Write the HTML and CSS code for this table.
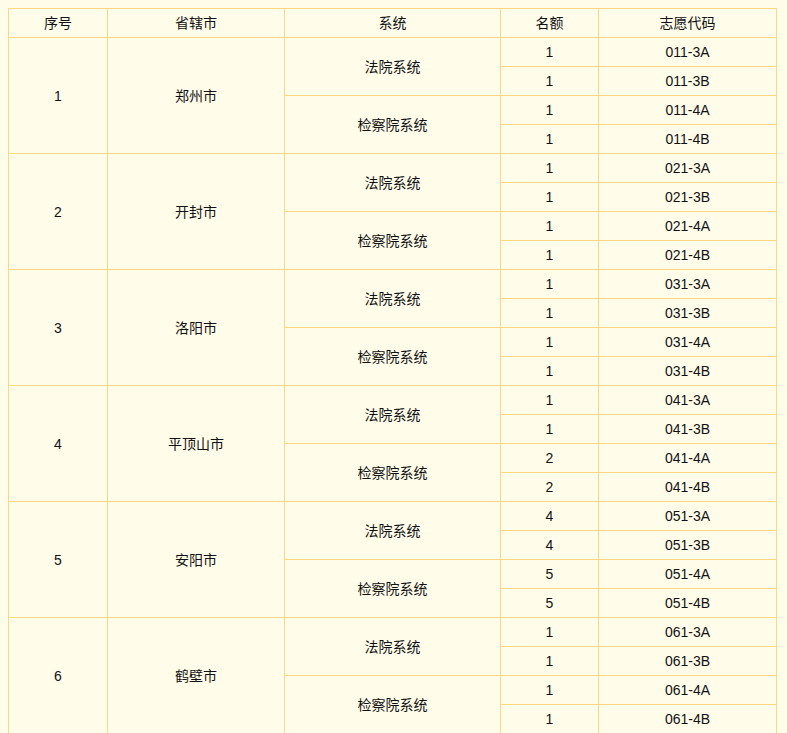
FILE: index.html
```html
<!DOCTYPE html>
<html lang="zh">
<head>
<meta charset="utf-8">
<link rel="stylesheet" href="styles.css">
</head>
<body>
<table class="quota">
<colgroup>
<col class="c1"><col class="c2"><col class="c3"><col class="c4"><col class="c5">
</colgroup>
<thead>
<tr><th>序号</th><th>省辖市</th><th>系统</th><th>名额</th><th>志愿代码</th></tr>
</thead>
<tbody>
<tr><td rowspan="4">1</td><td rowspan="4">郑州市</td><td rowspan="2">法院系统</td><td>1</td><td>011-3A</td></tr>
<tr><td>1</td><td>011-3B</td></tr>
<tr><td rowspan="2">检察院系统</td><td>1</td><td>011-4A</td></tr>
<tr><td>1</td><td>011-4B</td></tr>
<tr><td rowspan="4">2</td><td rowspan="4">开封市</td><td rowspan="2">法院系统</td><td>1</td><td>021-3A</td></tr>
<tr><td>1</td><td>021-3B</td></tr>
<tr><td rowspan="2">检察院系统</td><td>1</td><td>021-4A</td></tr>
<tr><td>1</td><td>021-4B</td></tr>
<tr><td rowspan="4">3</td><td rowspan="4">洛阳市</td><td rowspan="2">法院系统</td><td>1</td><td>031-3A</td></tr>
<tr><td>1</td><td>031-3B</td></tr>
<tr><td rowspan="2">检察院系统</td><td>1</td><td>031-4A</td></tr>
<tr><td>1</td><td>031-4B</td></tr>
<tr><td rowspan="4">4</td><td rowspan="4">平顶山市</td><td rowspan="2">法院系统</td><td>1</td><td>041-3A</td></tr>
<tr><td>1</td><td>041-3B</td></tr>
<tr><td rowspan="2">检察院系统</td><td>2</td><td>041-4A</td></tr>
<tr><td>2</td><td>041-4B</td></tr>
<tr><td rowspan="4">5</td><td rowspan="4">安阳市</td><td rowspan="2">法院系统</td><td>4</td><td>051-3A</td></tr>
<tr><td>4</td><td>051-3B</td></tr>
<tr><td rowspan="2">检察院系统</td><td>5</td><td>051-4A</td></tr>
<tr><td>5</td><td>051-4B</td></tr>
<tr><td rowspan="4">6</td><td rowspan="4">鹤壁市</td><td rowspan="2">法院系统</td><td>1</td><td>061-3A</td></tr>
<tr><td>1</td><td>061-3B</td></tr>
<tr><td rowspan="2">检察院系统</td><td>1</td><td>061-4A</td></tr>
<tr><td>1</td><td>061-4B</td></tr>
</tbody>
</table>
</body>
</html>
```

FILE: styles.css
```css
html, body {
  background: #fffcea;
}
body {
  margin: 8px;
  font-family: "Liberation Sans", Arial, "Noto Sans CJK SC", sans-serif;
  font-size: 14px;
  color: #111;
}
.quota {
  width: 768px;
  border-collapse: collapse;
  table-layout: fixed;
}
.quota .c1 { width: 99px; }
.quota .c2 { width: 177px; }
.quota .c3 { width: 216px; }
.quota .c4 { width: 98px; }
.quota .c5 { width: 178px; }
.quota th,
.quota td {
  border: 1px solid #fdd781;
  height: 28px;
  padding: 0;
  text-align: center;
  vertical-align: middle;
  font-weight: normal;
  line-height: 16px;
  box-sizing: border-box;
}
.quota th,
.quota tr td {
  height: 29px;
}
```
